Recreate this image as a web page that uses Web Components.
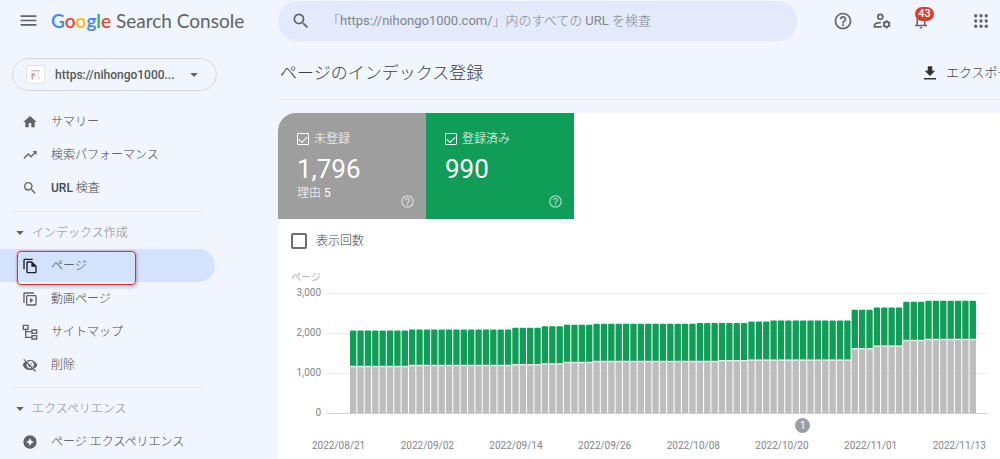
<!DOCTYPE html>
<html lang="ja">
<head>
<meta charset="utf-8">
<title>Google Search Console</title>
<style>
  body {
    margin: 0;
    background: #f1f5fd;
    color: #3c4043;
    font: 12px/16px Roboto, "Noto Sans CJK JP Light", "Noto Sans CJK JP DemiLight", "Noto Sans CJK JP", sans-serif;
    overflow: hidden;
  }
</style>
</head>
<body>
<sc-app></sc-app>
<script>
const ICONS = {
  menu: '<path d="M2 18.500h20v-2H2v2zm0-5.500h20v-2H2v2zm0-7.500v2h20v-2H2z"/>',
  search: '<path d="M15.5 14h-.79l-.28-.27A6.47 6.47 0 0 0 16 9.5 6.5 6.5 0 1 0 9.5 16c1.61 0 3.09-.59 4.23-1.57l.27.28v.79l5 4.99L20.49 19l-4.99-5zm-6 0C7.01 14 5 11.99 5 9.5S7.01 5 9.5 5 14 7.01 14 9.5 11.99 14 9.5 14z"/>',
  help: '<path d="M11 18h2v-2h-2v2zm1-16C6.48 2 2 6.48 2 12s4.48 10 10 10 10-4.48 10-10S17.52 2 12 2zm0 18c-4.41 0-8-3.59-8-8s3.59-8 8-8 8 3.59 8 8-3.59 8-8 8zm0-14c-2.21 0-4 1.79-4 4h2c0-1.1.9-2 2-2s2 .9 2 2c0 2-3 1.75-3 5h2c0-2.25 3-2.5 3-5 0-2.21-1.79-4-4-4z"/>',
  accounts: '<g fill="none" stroke="currentColor" stroke-width="2"><circle cx="10" cy="7" r="3"/><path d="M11.500 19H3v-1.800c0-.8.4-1.500 1.100-1.900 1.900-1 4.200-1.500 6.400-1.400"/><circle cx="17.500" cy="16" r="3"/></g><path d="M16.500 11h2l.3 2.200h-2.600zM16.500 21h2l.3-2.200h-2.600zM12.700 14.400l1-1.700 2 .8-1.300 2.200zM22.300 14.400l-1-1.700-2 .8 1.300 2.200zM12.700 17.600l1 1.700 2-.8-1.300-2.200zM22.300 17.600l-1 1.700-2-.8 1.300-2.200z"/>',
  bell: '<path d="M12 22c1.1 0 2-.9 2-2h-4c0 1.1.9 2 2 2zm6-5v-6c0-3.070-1.630-5.640-4.500-6.320V4c0-.83-.67-1.500-1.500-1.500s-1.500.67-1.500 1.500v.68C7.640 5.360 6 7.920 6 11v6H4v2h16v-2h-2zm-2 0H8v-6c0-2.480 1.510-4.500 4-4.500s4 2.020 4 4.500v6z"/>',
  apps: '<g><circle cx="5" cy="5" r="2.2"/><circle cx="12" cy="5" r="2.2"/><circle cx="19" cy="5" r="2.2"/><circle cx="5" cy="12" r="2.2"/><circle cx="12" cy="12" r="2.2"/><circle cx="19" cy="12" r="2.2"/><circle cx="5" cy="19" r="2.2"/><circle cx="12" cy="19" r="2.2"/><circle cx="19" cy="19" r="2.2"/></g>',
  download: '<path d="M19 9h-4V3H9v6H5l7 7 7-7zM4 18.500v2h16v-2H4z"/>',
  home: '<path d="M10 20v-6h4v6h5v-8h3L12 3 2 12h3v8z"/>',
  trend: '<path d="M16 6l2.290 2.290-4.880 4.880-4-4L2 16.590 3.410 18l6-6 4 4 6.300-6.290L22 12V6z"/>',
  pages: '<path d="M16 1H4c-1.100 0-2 .900-2 2v14h2V3h12V1z"/><path d="M15 5H8.500c-1.100 0-2 .900-2 2v14c0 1.100.900 2 2 2H20c1.100 0 2-.900 2-2V12l-7-7zM8.600 21V7H14v6h6v8H8.600z"/>',
  video: '<path d="M18 2H4c-1.100 0-2 .900-2 2v14h2V4h14V2z"/><path d="M20 6H8c-1.100 0-2 .900-2 2v12c0 1.100.900 2 2 2h12c1.100 0 2-.900 2-2V8c0-1.100-.900-2-2-2zm0 14H8V8h12v12z"/><path d="M12 10v8l5-4z"/>',
  sitemap: '<g fill="none" stroke="currentColor" stroke-width="2"><path d="M2 2h7v6H2zM15 9h7v5h-7zM15 17.500h7v5h-7zM5.500 8v12h9.500M5.500 11.500H15"/></g>',
  hidden: '<path d="M12 4.500c5 0 9.270 3.110 11 7.500a11.800 11.800 0 0 1-4.200 5.400l-2.500-2.500A5 5 0 0 0 9.200 7.800L6.900 5.600A11.800 11.800 0 0 1 12 4.500zM2 4.300 3.300 3 21 20.700 19.700 22l-3.300-3.300A11.800 11.800 0 0 1 1 12a11.800 11.800 0 0 1 4-5.100L2 4.300zM7.500 9.800A5 5 0 0 0 14.200 16.500l-1.500-1.600a3 3 0 0 1-3.600-3.600L7.500 9.800zM12 9a3 3 0 0 1 3 3v.500L11.500 9H12z"/>',
  experience: '<path fill-rule="evenodd" d="M12 2a10 10 0 1 0 0 20 10 10 0 0 0 0-20zm0 4 2 4 4 2-4 2-2 4-2-4-4-2 4-2z"/>',
  down: '<path d="M3 7l9 10 9-10z"/>'
};

/* Shared base: renders a template into an open shadow root. */
class Base extends HTMLElement {
  connectedCallback() {
    if (this.shadowRoot) return;
    const t = document.createElement('template');
    t.innerHTML = '<style>*,*::before,*::after,:host::after{box-sizing:border-box}' + this.css() + '</style>' + this.html();
    this.attachShadow({ mode: 'open' }).append(t.content.cloneNode(true));
  }
  css() { return ':host{display:block}'; }
  html() { return '<slot></slot>'; }
}

customElements.define('sc-icon', class extends Base {
  css() {
    const s = this.getAttribute('size') || 16;
    return `:host{display:block;flex:none;width:${s}px;height:${s}px}svg{display:block;width:100%;height:100%;fill:currentColor}`;
  }
  html() { return `<svg viewBox="0 0 24 24" aria-hidden="true">${ICONS[this.getAttribute('name')]}</svg>`; }
});

customElements.define('sc-brand', class extends Base {
  css() { return `
    :host{display:flex;align-items:center;height:41px;padding-left:19px;gap:13px;color:#5f6368}
    button{all:unset;display:block}
    a{display:flex;gap:5px;color:inherit;text-decoration:none;white-space:nowrap;font:19px/24px Lato,sans-serif}
    .g{font-weight:600}
    .b{color:#4285f4}.r{color:#ea4335}.y{color:#fbbc04}.n{color:#34a853}`; }
  html() { return `
    <button aria-label="メニュー"><sc-icon name="menu" size="19"></sc-icon></button>
    <a href="#"><span class="g"><span class="b">G</span><span class="r">o</span><span class="y">o</span><span class="b">g</span><span class="n">l</span><span class="r">e</span></span><span>Search Console</span></a>`; }
});

customElements.define('sc-topbar', class extends Base {
  css() { return `
    :host{display:flex;align-items:center;height:41px;color:#5f6368}
    label{flex:1;min-width:0;display:flex;align-items:center;gap:16px;height:40px;padding:0 13px;border-radius:20px;background:#e2eafb}
    input{all:unset;flex:1;min-width:0;font-size:13px;line-height:20px;color:#5f6368}
    input::placeholder{color:#80868b;opacity:1}
    nav{flex:none;display:flex;padding-left:26px}
    button{all:unset;position:relative;width:39px;height:40px;display:grid;place-items:center}
    .apps{margin-left:21px}
    .badge{position:absolute;left:14px;top:6px;width:19px;height:14px;border-radius:7px;background:#d93d33;color:#fff;font:500 11px/14px Roboto,sans-serif;text-align:center}`; }
  html() { return `
    <label><sc-icon name="search" size="20"></sc-icon>
      <input type="text" aria-label="URL 検査" placeholder="「https://nihongo1000.com/」内のすべての URL を検査"></label>
    <nav>
      <button aria-label="ヘルプ"><sc-icon name="help" size="20"></sc-icon></button>
      <button aria-label="ユーザー設定"><sc-icon name="accounts" size="20"></sc-icon></button>
      <button aria-label="通知"><sc-icon name="bell" size="18"></sc-icon><span class="badge">43</span></button>
      <button class="apps" aria-label="アプリ"><sc-icon name="apps" size="18"></sc-icon></button>
    </nav>`; }
});

customElements.define('sc-property', class extends Base {
  css() { return `
    :host{display:block;margin:17px 61px 14px 12px}
    div{display:flex;align-items:center;height:33px;padding:0 17px 0 13px;border:1px solid #d5d9df;border-radius:17px;color:#5f6368}
    .fav{flex:none;width:19px;height:19px;background:#fff;border:1px solid #e4e6ea;border-radius:2px}
    select{appearance:none;border:0;background:none;outline:0;flex:1;min-width:0;padding:0;margin:0 10px;font:500 12px/20px Roboto,sans-serif;color:#55585c}`; }
  html() { return `
    <div><svg class="fav" viewBox="0 0 19 19" aria-hidden="true"><path d="M5 5h9v1H5z" fill="#8f8a96"/><path d="M5 8h4v3H7v4H5z" fill="#d9a09b"/><path d="M11 8h3v1h-3zM11 10h2v1h-2zM12 12h2v3h-1z" fill="#e8cfd0"/></svg>
    <select aria-label="プロパティ"><option>https://nihongo1000...</option></select>
    <sc-icon name="down" size="10"></sc-icon></div>`; }
});

customElements.define('sc-nav-item', class extends Base {
  css() { return `
    :host{display:block;position:relative;margin-right:63px;color:#5f6368}
    a{display:flex;align-items:center;gap:13px;height:33px;padding-left:22px;color:inherit;text-decoration:none;white-space:nowrap}
    .t{color:#44474b}
    :host([selected]){background:#d3e3fd;border-radius:0 17px 17px 0;color:#202124}
    :host([selected])::after{content:"";position:absolute;left:17px;top:2px;width:119px;height:34px;border:1px solid #dc3038;border-radius:4px;box-shadow:0 0 1px 1px #dc303833,1px 2px 3px 1px #8897b755}`; }
  html() { return `<a href="#"><sc-icon name="${this.getAttribute('icon')}" size="16"></sc-icon><span class="t"><slot></slot></span></a>`; }
});

customElements.define('sc-nav-group', class extends Base {
  css() { return `
    :host{display:block}
    .rule{margin:6px 73px 0 12px;border-top:1px solid #e6e9ef}
    h2{display:flex;align-items:center;gap:7px;height:37px;margin:0;padding:4px 0 0 15px;font-size:12px;font-weight:400;color:#85898e}
    sc-icon{color:#5f6368}`; }
  html() {
    const l = this.getAttribute('label');
    return (l ? `<div class="rule"></div><h2><sc-icon name="down" size="10"></sc-icon>${l}</h2>` : '') + '<slot></slot>';
  }
});

customElements.define('sc-sidebar', class extends Base {
  css() { return `
    :host{display:block}
    b{font-weight:500}
    nav{display:grid;row-gap:0}
    .top{padding-bottom:1px}`; }
  html() { return `
    <sc-brand></sc-brand>
    <sc-property></sc-property>
    <nav>
      <sc-nav-group class="top">
        <sc-nav-item icon="home">サマリー</sc-nav-item>
        <sc-nav-item icon="trend">検索パフォーマンス</sc-nav-item>
        <sc-nav-item icon="search"><b>URL</b> 検査</sc-nav-item>
      </sc-nav-group>
      <sc-nav-group label="インデックス作成">
        <sc-nav-item icon="pages" selected>ページ</sc-nav-item>
        <sc-nav-item icon="video">動画ページ</sc-nav-item>
        <sc-nav-item icon="sitemap">サイトマップ</sc-nav-item>
        <sc-nav-item icon="hidden">削除</sc-nav-item>
      </sc-nav-group>
      <sc-nav-group label="エクスペリエンス">
        <sc-nav-item icon="experience">ページ エクスペリエンス</sc-nav-item>
      </sc-nav-group>
    </nav>`; }
});

customElements.define('sc-heading', class extends Base {
  css() { return `
    :host{display:flex;align-items:center;height:59px;margin:0 0 13px 2px;padding-top:6px;border-bottom:1px solid #e6e9ef}
    h1{flex:1;margin:0;font-size:17px;line-height:24px;font-weight:400;color:#3c4043}
    button{all:unset;flex:none;width:79px;display:flex;align-items:center;gap:7px;overflow:hidden;white-space:nowrap;font-size:13px;line-height:20px;color:#44474b}
    sc-icon{color:#303236}`; }
  html() { return `<h1><slot></slot></h1><button><sc-icon name="download" size="18"></sc-icon>エクスポート</button>`; }
});

customElements.define('sc-metric', class extends Base {
  css() { return `
    :host{display:flex;flex:0 1 148px;height:106px;padding:18px 11px 10px 19px;background:var(--tone);color:#fff}
    .main{flex:1}
    label{display:flex;align-items:center;gap:5px;line-height:16px;white-space:nowrap}
    input{appearance:none;margin:0;width:12px;height:12px;border:1px solid #fff;border-radius:1px;display:grid;place-items:center}
    input:checked::after{content:"";width:8px;height:5px;border:solid #fff;border-width:0 0 1px 1px;transform:translateY(-1px) rotate(-45deg)}
    .n{font-size:26px;line-height:32px;margin-top:6px}
    .s{line-height:16px}
    sc-icon{align-self:flex-end;opacity:.65}`; }
  html() { return `
    <div class="main"><label><input type="checkbox" checked>${this.getAttribute('label')}</label>
    <div class="n">${this.getAttribute('value')}</div><div class="s"><slot></slot></div></div>
    <sc-icon name="help" size="15"></sc-icon>`; }
});

/* Runs of equal days: [number of days, total pages, pages not indexed]. */
const RUNS = [[8,2060,1155],[14,2090,1180],[4,2130,1200],[3,2170,1220],[4,2205,1255],[14,2230,1280],
  [3,2250,1280],[4,2250,1300],[3,2290,1315],[11,2315,1315],[3,2580,1600],[4,2640,1665],[3,2780,1805],[7,2805,1830]];

customElements.define('sc-chart', class extends Base {
  css() { return `
    :host{display:block;padding:0 13px;color:#80868b;font-size:10px;line-height:12px}
    .plot{display:grid;grid-template-columns:30px 1fr;column-gap:5px;margin-top:3px}
    .y{display:flex;flex-direction:column;justify-content:space-between;text-align:right;height:132px}
    .area{position:relative;height:121px;margin-top:6px;display:flex;flex-direction:column;justify-content:space-between}
    .area i{display:block;height:1px;background:#ececec}
    .area i:last-of-type{background:#d0d0d0}
    svg{position:absolute;left:24px;top:0;width:calc(100% - 34px);height:120px}
    .mark{position:absolute;left:71%;top:125px;width:15px;height:15px;border-radius:50%;background:#9e9e9e;color:#fff;text-align:center;line-height:15px}
    .x{display:flex;justify-content:space-between;margin:21px 1px 0 21px}`; }
  html() {
    let bars = '', i = 0;
    for (const [n, total, out] of RUNS)
      for (let k = 0; k < n; k++, i++)
        bars += `<rect x="${i}" y="${3000 - total}" width=".86" height="${total - out}" rx=".14" ry="25" fill="#0f9d58"/>` +
                `<rect x="${i}" y="${2975 - out}" width=".86" height="50" fill="#dff3e8"/>` +
                `<rect x="${i}" y="${3010 - out}" width=".86" height="${out - 10}" fill="#bdbdbd"/>`;
    const dates = ['08/21','09/02','09/14','09/26','10/08','10/20','11/01','11/13'];
    return `<div>ページ</div>
    <div class="plot">
      <div class="y"><span>3,000</span><span>2,000</span><span>1,000</span><span>0</span></div>
      <div class="area"><i></i><i></i><i></i><i></i>
        <svg viewBox="0 0 85 3000" preserveAspectRatio="none" role="img" aria-label="ページ数の推移">${bars}</svg>
        <span class="mark">1</span>
      </div>
    </div>
    <div class="x">${dates.map(d => `<span>2022/${d}</span>`).join('')}</div>`;
  }
});

customElements.define('sc-panel', class extends Base {
  css() { return `
    :host{display:block;background:#fff;border-radius:18px 0 0 0;overflow:hidden;padding-bottom:16px}
    .cards{display:flex}
    .toggle{display:flex;align-items:center;gap:9px;margin:12px 13px 21px;line-height:20px}
    input{appearance:none;margin:0;width:16px;height:16px;border:2px solid #6b6f73;border-radius:2px}`; }
  html() { return `
    <div class="cards">
      <sc-metric label="未登録" value="1,796" style="--tone:#9e9e9e">理由 5</sc-metric>
      <sc-metric label="登録済み" value="990" style="--tone:#0f9d58"></sc-metric>
    </div>
    <label class="toggle"><input type="checkbox">表示回数</label>
    <sc-chart></sc-chart>`; }
});

customElements.define('sc-app', class extends Base {
  css() { return `
    :host{display:grid;grid-template-columns:278px minmax(0,1fr)}
    main{min-width:0}`; }
  html() { return `
    <sc-sidebar></sc-sidebar>
    <main><sc-topbar></sc-topbar><sc-heading>ページのインデックス登録</sc-heading><sc-panel></sc-panel></main>`; }
});
</script>
</body>
</html>
